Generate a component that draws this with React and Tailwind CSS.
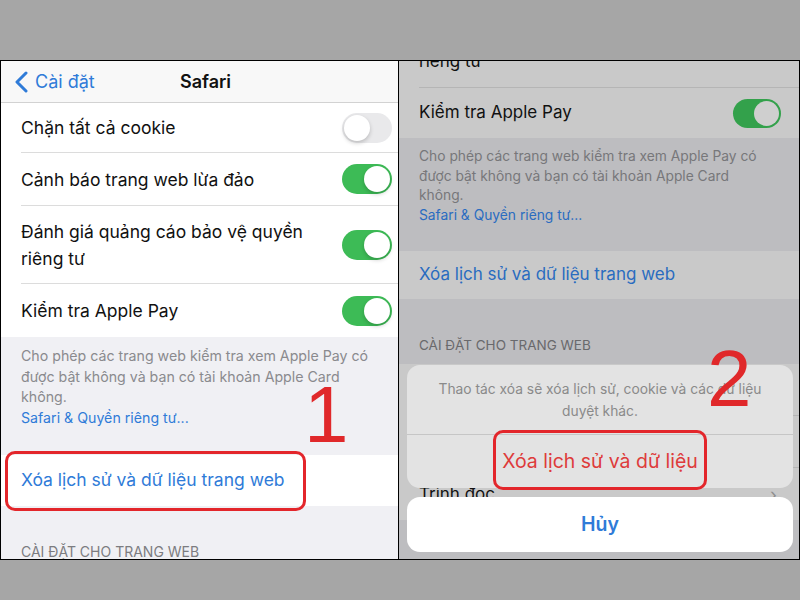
import React from 'react';

const Toggle = ({ on, dim }) => {
    if (dim) {
        return (
            <div className="w-[48px] h-[29px] rounded-full bg-[#33a14b] p-[2px] flex justify-end shrink-0">
                <div className="w-[25px] h-[25px] rounded-full bg-[#cfcfcf]" />
            </div>
        );
    }
    return (
        <div className={`w-[50px] h-[30px] rounded-full p-[2px] flex shrink-0 ${on ? 'bg-[#3dbb56] justify-end' : 'bg-[#e9e9eb] justify-start'}`}>
            <div className="w-[26px] h-[26px] rounded-full bg-white shadow-[0_2px_4px_rgba(0,0,0,0.2)]" />
        </div>
    );
};

const Row = ({ children, toggle, h, last }) => (
    <div className={`flex bg-white pl-5 ${h}`}>
        <div className={`flex-1 flex items-center justify-between pr-[6px] ${last ? '' : 'border-b border-[#dcdcdc]'}`}>
            <div className="text-[17.5px] leading-[27px] text-[#111]">{children}</div>
            {toggle}
        </div>
    </div>
);

const LeftPanel = () => (
    <div className="w-[398px] h-full bg-[#f0f0f4] border-r border-black overflow-hidden flex flex-col">
        {/* thanh điều hướng */}
        <div className="h-[42px] shrink-0 bg-[#f8f8f8] border-b border-[#d2d2d2] flex items-center relative">
            <div className="flex items-center pl-[13px] gap-[7px] text-[#2f7bd8] text-[18px]">
                <svg width="14" height="22" viewBox="0 0 14 22"><polyline points="12,2 3,11 12,20" fill="none" stroke="#2f7bd8" strokeWidth="3" strokeLinecap="round" strokeLinejoin="round" /></svg>
                <span>Cài đặt</span>
            </div>
            <div className="absolute left-0 right-0 text-center text-[18px] font-semibold text-[#111] pl-[12px]">Safari</div>
        </div>

        <Row h="h-[50px] shrink-0" toggle={<Toggle on={false} />}>Chặn tất cả cookie</Row>
        <Row h="h-[53px] shrink-0" toggle={<Toggle on />}>Cảnh báo trang web lừa đảo</Row>
        <Row h="h-[78px] shrink-0" toggle={<Toggle on />}>
            <div>Đánh giá quảng cáo bảo vệ quyền</div>
            <div>riêng tư</div>
        </Row>
        <Row h="h-[53px] shrink-0" toggle={<Toggle on />} last>Kiểm tra Apple Pay</Row>

        <div className="pl-5 pr-2 pt-[9px] pb-[27px] text-[14.2px] leading-[20.5px] text-[#8a8a8e] whitespace-nowrap">
            <div>Cho phép các trang web kiểm tra xem Apple Pay có</div>
            <div>được bật không và bạn có tài khoản Apple Card</div>
            <div>không.</div>
            <div className="text-[#2f7bd8]">Safari &amp; Quyền riêng tư...</div>
        </div>

        <div className="h-[51px] shrink-0 bg-white flex items-center pl-5 text-[17.5px] text-[#2f7bd8]">Xóa lịch sử và dữ liệu trang web</div>

        <div className="pl-5 pt-[35px] text-[14px] text-[#7c7c80]">CÀI ĐẶT CHO TRANG WEB</div>
    </div>
);

const RightPanel = () => (
    <div className="flex-1 h-full bg-[#bdbdc0] overflow-hidden relative">
        <div className="h-[78px] mt-[-51px] bg-[#c9c9c9] pl-5 flex">
            <div className="flex-1 border-b border-[#b5b5b5] flex items-end pb-[14px] text-[17px] leading-[24px] text-[#111]">riêng tư</div>
        </div>
        <div className="h-[50px] bg-[#c9c9c9] pl-5 pr-[18px] flex items-center justify-between">
            <span className="text-[17px] text-[#111]">Kiểm tra Apple Pay</span>
            <Toggle dim />
        </div>
        <div className="pl-5 pr-2 pt-[9px] pb-[26px] text-[13.8px] leading-[19.5px] text-[#77777a] whitespace-nowrap">
            <div>Cho phép các trang web kiểm tra xem Apple Pay có</div>
            <div>được bật không và bạn có tài khoản Apple Card</div>
            <div>không.</div>
            <div className="text-[#2a6cc0]">Safari &amp; Quyền riêng tư...</div>
        </div>
        <div className="h-[48px] bg-[#c9c9c9] flex items-center pl-5 text-[17px] text-[#2a6cc0]">Xóa lịch sử và dữ liệu trang web</div>
        <div className="pl-5 pt-[36px] pb-[9px] text-[13.5px] text-[#69696c]">CÀI ĐẶT CHO TRANG WEB</div>
        <div className="bg-[#c9c9c9] pl-5">
            <div className="h-[52px] flex items-center border-b border-[#b5b5b5] text-[17px] text-[#111]">Thu phóng trang</div>
            <div className="h-[52px] flex items-center border-b border-[#b5b5b5] text-[17px] text-[#111]">Yêu cầu trang web cho máy tính</div>
            <div className="h-[52px] flex items-center justify-between pr-[22px] text-[17px] text-[#111]">
                <span>Trình đọc</span>
                <span className="text-[#8e8e8e] text-[18px]">›</span>
            </div>
        </div>

        {/* bảng tác vụ */}
        <div className="absolute left-[8px] right-[6px] bottom-[7px] flex flex-col gap-[9px]">
            <div className="h-[123px] rounded-[13px] bg-[#e3e3e3] flex flex-col">
                <div className="h-[70px] border-b border-[#c6c6c6] flex flex-col items-center justify-center text-[13.8px] leading-[22px] text-[#8a8a8a]">
                    <div>Thao tác xóa sẽ xóa lịch sử, cookie và các dữ liệu</div>
                    <div>duyệt khác.</div>
                </div>
                <div className="flex-1 flex items-center justify-center text-[19.5px] text-[#de3b3b]">Xóa lịch sử và dữ liệu</div>
            </div>
            <div className="h-[55px] rounded-[13px] bg-white flex items-center justify-center text-[19.5px] font-semibold text-[#2f7bd8]">Hủy</div>
        </div>
    </div>
);

export default function App() {
    return (
        <div className="w-[800px] h-[600px] bg-[#a6a6a6] relative flex flex-col font-['Inter','Noto_Sans',sans-serif]">
            <div className="h-[60px] shrink-0" />
            <div className="h-[500px] shrink-0 border border-black flex">
                <LeftPanel />
                <RightPanel />
            </div>

            {/* chú thích màu đỏ */}
            <div className="absolute left-[5px] top-[451px] w-[301px] h-[60px] border-[3px] border-[#e3262b] rounded-[10px]" />
            <div className="absolute left-[493px] top-[430px] w-[214px] h-[60px] border-[3px] border-[#e3262b] rounded-[10px]" />
            <div className="absolute left-[304px] top-[375px] text-[80px] leading-none text-[#e0282a] font-['Liberation_Sans',Arial,sans-serif]">1</div>
            <div className="absolute left-[707px] top-[339px] text-[80px] leading-none text-[#e0282a] font-['Liberation_Sans',Arial,sans-serif]">2</div>
        </div>
    );
}
